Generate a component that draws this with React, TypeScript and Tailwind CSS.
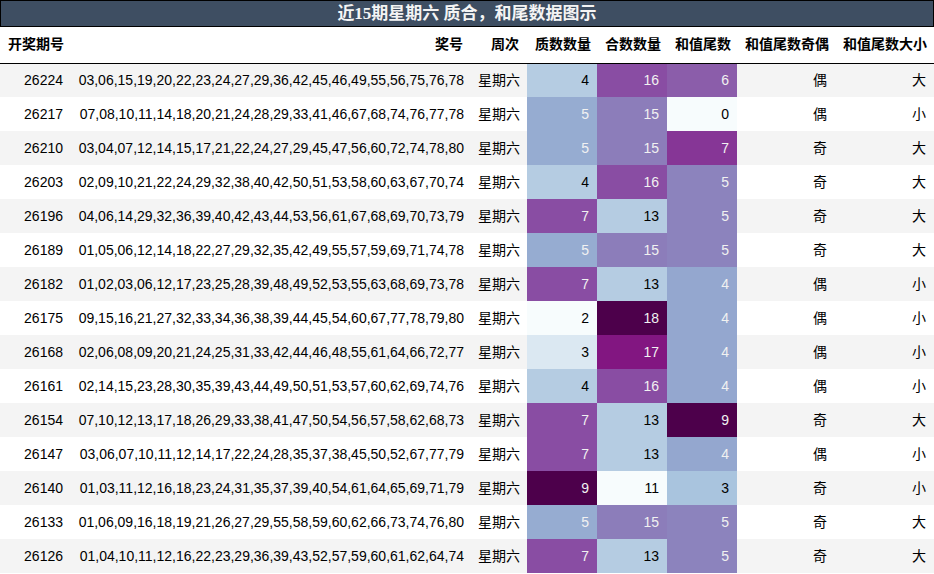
import React from 'react';

type Row = [number, string, number, number, number, string, string];

const ROWS: Row[] = [
  [26224, '03,06,15,19,20,22,23,24,27,29,36,42,45,46,49,55,56,75,76,78', 4, 16, 6, '偶', '大'],
  [26217, '07,08,10,11,14,18,20,21,24,28,29,33,41,46,67,68,74,76,77,78', 5, 15, 0, '偶', '小'],
  [26210, '03,04,07,12,14,15,17,21,22,24,27,29,45,47,56,60,72,74,78,80', 5, 15, 7, '奇', '大'],
  [26203, '02,09,10,21,22,24,29,32,38,40,42,50,51,53,58,60,63,67,70,74', 4, 16, 5, '奇', '大'],
  [26196, '04,06,14,29,32,36,39,40,42,43,44,53,56,61,67,68,69,70,73,79', 7, 13, 5, '奇', '大'],
  [26189, '01,05,06,12,14,18,22,27,29,32,35,42,49,55,57,59,69,71,74,78', 5, 15, 5, '奇', '大'],
  [26182, '01,02,03,06,12,17,23,25,28,39,48,49,52,53,55,63,68,69,73,78', 7, 13, 4, '偶', '小'],
  [26175, '09,15,16,21,27,32,33,34,36,38,39,44,45,54,60,67,77,78,79,80', 2, 18, 4, '偶', '小'],
  [26168, '02,06,08,09,20,21,24,25,31,33,42,44,46,48,55,61,64,66,72,77', 3, 17, 4, '偶', '小'],
  [26161, '02,14,15,23,28,30,35,39,43,44,49,50,51,53,57,60,62,69,74,76', 4, 16, 4, '偶', '小'],
  [26154, '07,10,12,13,17,18,26,29,33,38,41,47,50,54,56,57,58,62,68,73', 7, 13, 9, '奇', '大'],
  [26147, '03,06,07,10,11,12,14,17,22,24,28,35,37,38,45,50,52,67,77,79', 7, 13, 4, '偶', '小'],
  [26140, '01,03,11,12,16,18,23,24,31,35,37,39,40,54,61,64,65,69,71,79', 9, 11, 3, '奇', '小'],
  [26133, '01,06,09,16,18,19,21,26,27,29,55,58,59,60,62,66,73,74,76,80', 5, 15, 5, '奇', '大'],
  [26126, '01,04,10,11,12,16,22,23,29,36,39,43,52,57,59,60,61,62,64,74', 7, 13, 5, '奇', '大'],
];

// BuPu gradient, per column (min..max of that column)
const PRIME_CLS: Record<number, string> = {
  2: 'bg-[#f7fcfd] text-black',
  3: 'bg-[#dbe8f2] text-black',
  4: 'bg-[#b5cce2] text-black',
  5: 'bg-[#96acd1] text-[#f1f1f1]',
  7: 'bg-[#894da3] text-[#f1f1f1]',
  9: 'bg-[#4d004b] text-[#f1f1f1]',
};

const COMP_CLS: Record<number, string> = {
  11: 'bg-[#f7fcfd] text-black',
  13: 'bg-[#b5cce2] text-black',
  15: 'bg-[#8c7dba] text-[#f1f1f1]',
  16: 'bg-[#894da3] text-[#f1f1f1]',
  17: 'bg-[#821681] text-[#f1f1f1]',
  18: 'bg-[#4d004b] text-[#f1f1f1]',
};

const TAIL_CLS: Record<number, string> = {
  0: 'bg-[#f7fcfd] text-black',
  3: 'bg-[#a9c4de] text-black',
  4: 'bg-[#94a7cf] text-[#f1f1f1]',
  5: 'bg-[#8c83bd] text-[#f1f1f1]',
  6: 'bg-[#8b5daa] text-[#f1f1f1]',
  7: 'bg-[#863696] text-[#f1f1f1]',
  9: 'bg-[#4d004b] text-[#f1f1f1]',
};

const HEADERS = ['开奖期号', '奖号', '周次', '质数数量', '合数数量', '和值尾数', '和值尾数奇偶', '和值尾数大小'];

export default function App() {
  return (
    <div className="w-[934px] h-[574px] overflow-hidden bg-white font-['Liberation_Sans','Noto_Sans_CJK_SC',sans-serif] text-[14px] text-black">
      <div className="h-[27px] border border-black bg-[#3e4e62] flex items-center justify-center">
        <span className="font-bold text-[17px] text-[#f4f4f4] font-['Liberation_Serif','Noto_Sans_CJK_SC',serif] leading-none">
          近15期星期六 质合，和尾数据图示
        </span>
      </div>
      <table className="table-fixed border-collapse w-[934px]">
        <colgroup>
          <col className="w-[71px]" />
          <col className="w-[400px]" />
          <col className="w-[56px]" />
          <col className="w-[70px]" />
          <col className="w-[70px]" />
          <col className="w-[70px]" />
          <col className="w-[98px]" />
          <col className="w-[99px]" />
        </colgroup>
        <thead>
          <tr className="h-[36px] border-b border-black">
            {HEADERS.map((h, i) => (
              <th
                key={h}
                className={`p-0 px-2 font-bold whitespace-nowrap align-middle ${i === 0 ? 'text-left' : 'text-right'}`}
              >
                {h}
              </th>
            ))}
          </tr>
        </thead>
        <tbody>
          {ROWS.map((r, idx) => (
            <tr key={r[0]} className={`h-[34px] ${idx % 2 === 0 ? 'bg-[#f4f4f4]' : 'bg-white'}`}>
              <td className="p-0 px-2 text-right whitespace-nowrap">{r[0]}</td>
              <td className="p-0 pr-[7px] text-right whitespace-nowrap">{r[1]}</td>
              <td className="p-0 px-[7px] text-right whitespace-nowrap">星期六</td>
              <td className={`p-0 px-2 text-right ${PRIME_CLS[r[2]]}`}>{r[2]}</td>
              <td className={`p-0 px-2 text-right ${COMP_CLS[r[3]]}`}>{r[3]}</td>
              <td className={`p-0 px-2 text-right ${TAIL_CLS[r[4]]}`}>{r[4]}</td>
              <td className="p-0 px-2 text-right">{r[5]}</td>
              <td className="p-0 px-2 text-right">{r[6]}</td>
            </tr>
          ))}
        </tbody>
      </table>
    </div>
  );
}
